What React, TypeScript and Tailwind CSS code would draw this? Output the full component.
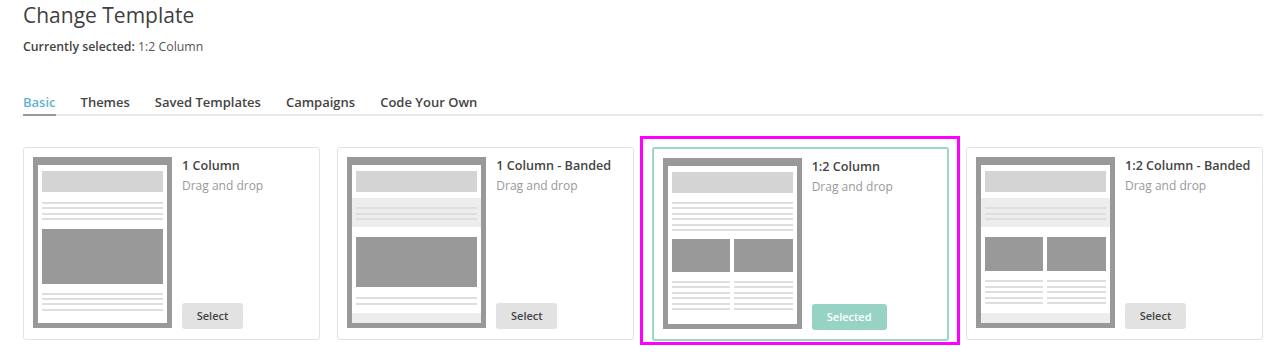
import React from "react";

const Line = () => <div className="h-[2px] bg-[#dedede]" />;

function Lines({ n, gap = "gap-[3.4px]" }: { n: number; gap?: string }) {
  return (
    <div className={`flex flex-col ${gap}`}>
      {Array.from({ length: n }).map((_, i) => (
        <Line key={i} />
      ))}
    </div>
  );
}

function Frame({ children }: { children: React.ReactNode }) {
  return (
    <div className="w-[139px] h-[171px] shrink-0 bg-[#999999] pt-[8px] px-[5px] pb-[5px]">
      <div className="h-full bg-white flex flex-col">{children}</div>
    </div>
  );
}

function Thumb1() {
  return (
    <Frame>
      <div className="px-[4px] pt-[6px]">
        <div className="h-[21px] bg-[#d4d4d4]" />
        <div className="mt-[10px]">
          <Lines n={4} gap="gap-[3.3px]" />
        </div>
        <div className="mt-[9px] h-[55px] bg-[#999999]" />
        <div className="mt-[9px]">
          <Lines n={4} gap="gap-[3.3px]" />
        </div>
      </div>
    </Frame>
  );
}

function Thumb2() {
  return (
    <Frame>
      <div className="px-[4px] pt-[6px] pb-[6px]">
        <div className="h-[21px] bg-[#d4d4d4]" />
      </div>
      <div className="bg-[#ededed] h-[29px] px-[4px] pt-[9px]">
        <Lines n={3} gap="gap-[3.5px]" />
      </div>
      <div className="px-[4px] pt-[10px] flex-1">
        <div className="h-[50px] bg-[#999999]" />
        <div className="mt-[10px]">
          <Lines n={2} gap="gap-[4px]" />
        </div>
      </div>
      <div className="h-[10px] bg-[#ededed]" />
    </Frame>
  );
}

function Thumb3() {
  return (
    <Frame>
      <div className="px-[4px] pt-[6px]">
        <div className="h-[21px] bg-[#d4d4d4]" />
        <div className="mt-[9px]">
          <Lines n={6} gap="gap-[3.4px]" />
        </div>
        <div className="mt-[8px] grid grid-cols-2 gap-[4px]">
          <div className="h-[33px] bg-[#999999]" />
          <div className="h-[33px] bg-[#999999]" />
        </div>
        <div className="mt-[9px] grid grid-cols-2 gap-[4px]">
          <Lines n={6} gap="gap-[3.4px]" />
          <Lines n={6} gap="gap-[3.4px]" />
        </div>
      </div>
    </Frame>
  );
}

function Thumb4() {
  return (
    <Frame>
      <div className="px-[4px] pt-[6px] pb-[6px]">
        <div className="h-[21px] bg-[#d4d4d4]" />
      </div>
      <div className="bg-[#ededed] h-[29px] px-[4px] pt-[9px]">
        <Lines n={3} gap="gap-[3.5px]" />
      </div>
      <div className="px-[4px] pt-[10px] flex-1">
        <div className="grid grid-cols-2 gap-[4px]">
          <div className="h-[34px] bg-[#999999]" />
          <div className="h-[34px] bg-[#999999]" />
        </div>
        <div className="mt-[9px] grid grid-cols-2 gap-[4px]">
          <Lines n={5} gap="gap-[3.5px]" />
          <Lines n={5} gap="gap-[3.5px]" />
        </div>
      </div>
      <div className="h-[10px] bg-[#ededed]" />
    </Frame>
  );
}

function Card({
  title,
  thumb,
  selected = false,
}: {
  title: string;
  thumb: React.ReactNode;
  selected?: boolean;
}) {
  return (
    <div className="relative">
      {selected && (
        <div className="absolute left-[-12px] top-[-11px] right-[-11px] bottom-[-4px] border-[3px] border-[#ff00ff] pointer-events-none" />
      )}
      <div
        className={
          selected
            ? "h-[194px] rounded-[3px] border-2 border-[#9ad7c9] p-[9px] flex gap-[10px] bg-white"
            : "h-[193px] rounded-[3px] border border-[#e3e3e3] p-[9px] flex gap-[10px] bg-white"
        }
      >
        {thumb}
        <div className="flex flex-col h-[172px] min-w-0">
          <div className="text-[12.6px] leading-[18px] font-semibold text-[#444444] whitespace-nowrap">
            {title}
          </div>
          <div className="mt-[2px] text-[12px] leading-[18px] text-[#999999]">Drag and drop</div>
          <div className="mt-auto">
            {selected ? (
              <div className="w-[75px] h-[26px] rounded-[3px] bg-[#96d3c5] text-white text-[11px] font-semibold flex items-center justify-center">
                Selected
              </div>
            ) : (
              <div className="w-[61px] h-[26px] rounded-[3px] bg-[#e2e2e2] text-[#444444] text-[11px] font-semibold flex items-center justify-center">
                Select
              </div>
            )}
          </div>
        </div>
      </div>
    </div>
  );
}

export default function App() {
  const tabs = ["Basic", "Themes", "Saved Templates", "Campaigns", "Code Your Own"];
  return (
    <div
      className="w-[1280px] h-[364px] bg-white pl-[23px] overflow-hidden"
      style={{ fontFamily: '"Open Sans", "Noto Sans", sans-serif' }}
    >
      <h1 className="pt-[1px] text-[21px] leading-[28px] text-[#3f3f3f] font-medium">Change Template</h1>
      <div className="mt-[9px] text-[12.3px] leading-[18px] text-[#555555]">
        <span className="font-semibold text-[#444444]">Currently selected:</span> 1:2 Column
      </div>
      <div className="mt-[37px] w-[1240px] flex gap-[25px] border-b-2 border-[#e8e8e8]">
        {tabs.map((t, i) => (
          <div
            key={t}
            className={
              i === 0
                ? "pb-[3px] -mb-[2px] border-b-2 border-[#999999] text-[13px] leading-[18px] font-semibold text-[#5fb3d0]"
                : "pb-[3px] text-[13px] leading-[18px] font-semibold text-[#444444]"
            }
          >
            {t}
          </div>
        ))}
      </div>
      <div className="mt-[31px] w-[1240px] grid grid-cols-4 gap-[17.33px]">
        <Card title="1 Column" thumb={<Thumb1 />} />
        <Card title="1 Column - Banded" thumb={<Thumb2 />} />
        <Card title="1:2 Column" thumb={<Thumb3 />} selected />
        <Card title="1:2 Column - Banded" thumb={<Thumb4 />} />
      </div>
    </div>
  );
}
